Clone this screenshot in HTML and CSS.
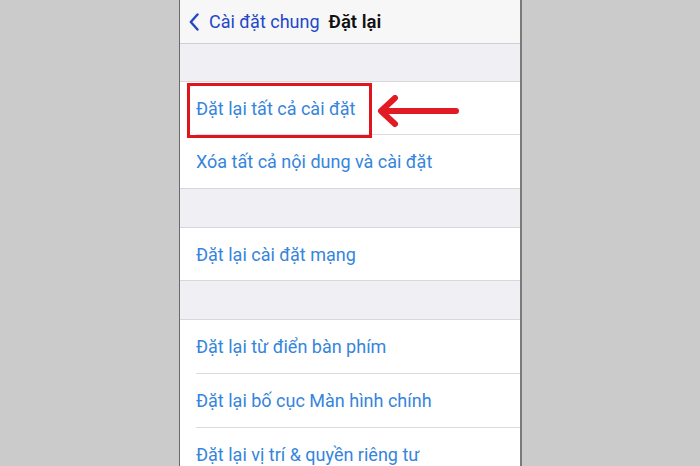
FILE: index.html
```html
<!DOCTYPE html>
<html lang="vi">
<head>
<meta charset="utf-8">
<title>Đặt lại</title>
<link rel="stylesheet" href="styles.css">
</head>
<body>
<div class="phone">
  <div class="nav">
    <svg class="chev" width="10" height="18" viewBox="0 0 10 18"><path d="M8.5 1.5 L1.8 9 L8.5 16.5" fill="none" stroke="#2347c9" stroke-width="2.4" stroke-linecap="round" stroke-linejoin="round"/></svg>
    <span class="back">Cài đặt chung</span>
    <span class="title">Đặt lại</span>
  </div>
  <div class="group first">
    <div class="row"><div class="label">Đặt lại tất cả cài đặt</div></div>
    <div class="row"><div class="label">Xóa tất cả nội dung và cài đặt</div></div>
    <div class="highlight"></div>
    <svg class="arrow" width="84" height="34" viewBox="0 0 84 34"><path d="M80 16 L6 16 M19 3 L5 16 L19 29" fill="none" stroke="#e01b24" stroke-width="6" stroke-linecap="round" stroke-linejoin="round"/></svg>
  </div>
  <div class="group">
    <div class="row"><div class="label">Đặt lại cài đặt mạng</div></div>
  </div>
  <div class="group tall">
    <div class="row"><div class="label">Đặt lại từ điển bàn phím</div></div>
    <div class="row"><div class="label">Đặt lại bố cục Màn hình chính</div></div>
    <div class="row"><div class="label">Đặt lại vị trí &amp; quyền riêng tư</div></div>
  </div>
</div>
</body>
</html>
```
FILE: styles.css
```css
html, body {
  margin: 0;
  padding: 0;
  height: 100%;
  overflow: hidden;
}
body {
  background: #cbcbcb;
  font-family: Roboto, "Noto Sans", "Liberation Sans", sans-serif;
}
.phone {
  width: 340px;
  height: 466px;
  margin-left: 179px;
  border-left: 1px solid #6a6a6a;
  border-right: 2px solid #7a7a7a;
  background: #efeff4;
  overflow: hidden;
}
.nav {
  height: 43px;
  background: #f7f7f8;
  border-bottom: 1px solid #cfcfd3;
  display: flex;
  align-items: center;
  padding-left: 9px;
  font-size: 18px;
}
.chev {
  margin-right: 10px;
  margin-top: 1px;
}
.back {
  color: #2347c9;
  margin-right: 9px;
}
.title {
  color: #111;
  font-weight: 600;
  font-size: 18.5px;
}
.group {
  position: relative;
  margin-top: 38px;
  background: #fff;
  border-top: 1px solid #d8d8dc;
  border-bottom: 1px solid #d8d8dc;
}
.group.first {
  margin-top: 37px;
}
.row {
  padding-left: 16px;
}
.label {
  height: 52px;
  display: flex;
  align-items: center;
  border-bottom: 1px solid #dcdce0;
  color: #3585dc;
  font-size: 18px;
}
.group.tall .label {
  height: 53px;
}
.row:last-child .label {
  border-bottom: none;
}
.group.first .row:nth-child(2) .label {
  border-bottom: none;
  height: 53px;
}
.highlight {
  position: absolute;
  left: 7px;
  top: 1px;
  width: 179px;
  height: 49px;
  border: 3px solid #e0141d;
}
.arrow {
  position: absolute;
  left: 196px;
  top: 13px;
}
```
